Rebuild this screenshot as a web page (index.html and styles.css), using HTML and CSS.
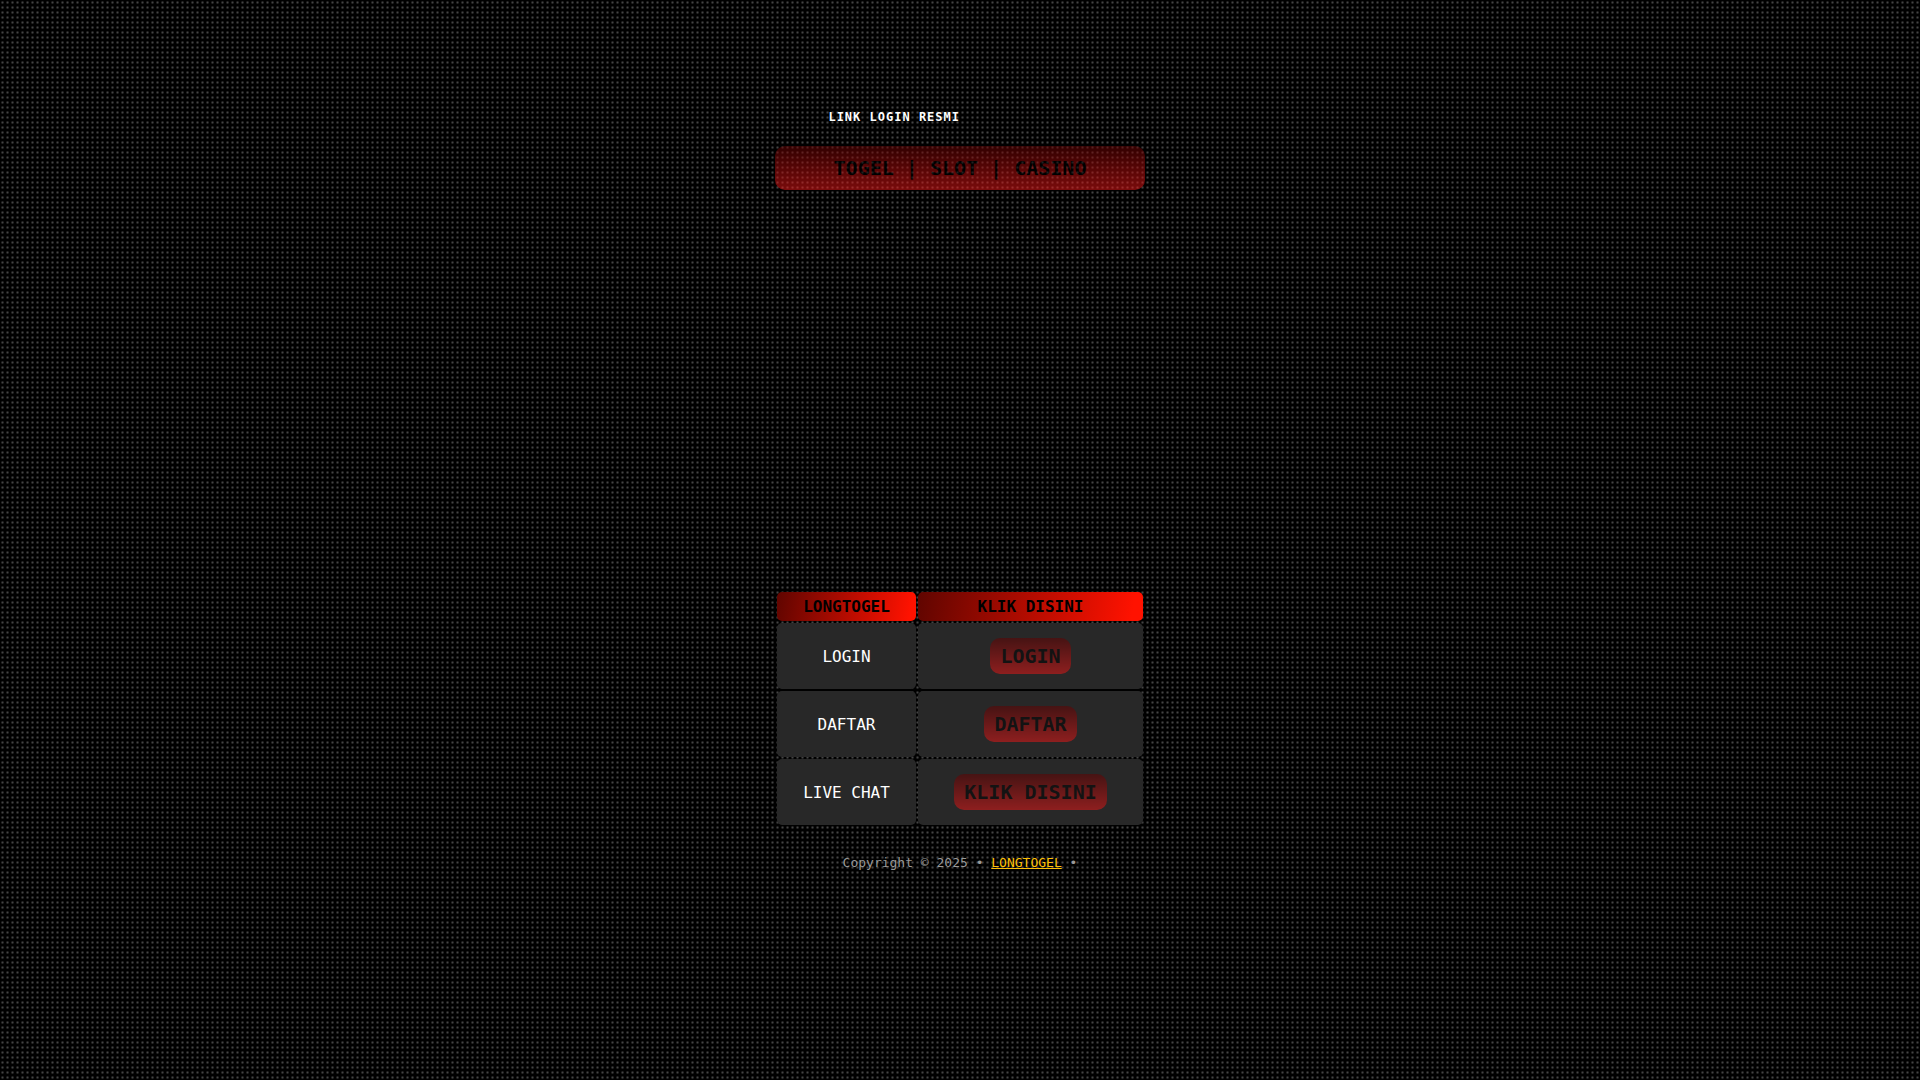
FILE: index.html
```html
<!DOCTYPE html>
<html lang="id">
<head>
  <meta charset="utf-8">
  <meta name="viewport" content="width=device-width, initial-scale=1">
  <title>LONGTOGEL</title>
  <link rel="stylesheet" href="styles.css">
</head>
<body>
  <main class="container">
    <h1 class="tagline">LINK LOGIN RESMI</h1>
    <a class="btn banner" href="#">TOGEL | SLOT | CASINO</a>

    <!-- Promo slot -->
    <div class="promo"></div>

    <table class="links">
      <thead>
        <tr>
          <th class="name-col">LONGTOGEL</th>
          <th>KLIK DISINI</th>
        </tr>
      </thead>
      <tbody>
        <tr>
          <td>LOGIN</td>
          <td><a class="btn" href="#">LOGIN</a></td>
        </tr>
        <tr>
          <td>DAFTAR</td>
          <td><a class="btn" href="#">DAFTAR</a></td>
        </tr>
        <tr>
          <td>LIVE CHAT</td>
          <td><a class="btn" href="#">KLIK DISINI</a></td>
        </tr>
      </tbody>
    </table>

    <footer class="footer">Copyright © 2025 • <a href="#">LONGTOGEL</a> •</footer>
  </main>
</body>
</html>
```

FILE: styles.css
```css
* {
  box-sizing: border-box;
}

body {
  margin: 0;
  padding: 110px 15px 40px;
  min-height: 100vh;
  background: radial-gradient(#444 10%, transparent 50%) 0 0 / 5px 5px #000;
  color: #fff;
  font-family: "DejaVu Sans Mono", Menlo, Consolas, monospace;
  font-size: 16px;
}

.container {
  max-width: 370px;
  margin: 0 auto;
  text-align: center;
}

.tagline {
  width: 50%;
  margin: 0 0 22px;
  font-size: 12px;
  line-height: 14px;
  letter-spacing: 1px;
  text-align: right;
  white-space: nowrap;
}

/* Buttons */
.btn {
  display: inline-block;
  padding: 6px 10px;
  border-radius: 10px;
  background: linear-gradient(to bottom, #650000, #f31717);
  color: #000;
  font-size: 20px;
  font-weight: bold;
  line-height: 24px;
  text-decoration: none;
  opacity: 0.5;
}

.banner {
  display: block;
  padding: 10px;
}

.promo {
  height: 400px;
}

/* Links table */
.links {
  width: 100%;
  border-spacing: 2px;
}

.links th {
  padding: 5px;
  border-radius: 5px;
  background: linear-gradient(100deg, #600500, #ff1200 95%);
  color: #000;
  line-height: 19px;
}

.links td {
  padding: 15px 5px;
  border-radius: 5px;
  background: #282828;
}

.links td .btn {
  vertical-align: middle;
}

.links .name-col {
  width: 139px;
}

.footer {
  margin-top: 28px;
  color: #999;
  font-size: 13px;
  line-height: 16px;
}

.footer a {
  color: #ffc107;
}
```
